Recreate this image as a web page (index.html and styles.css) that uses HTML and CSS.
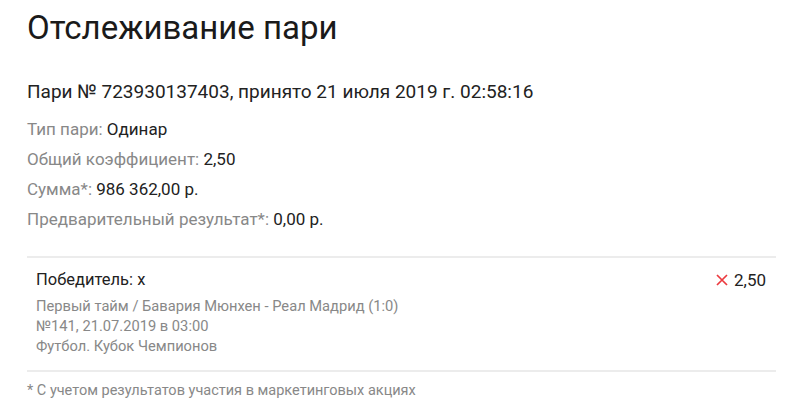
FILE: index.html
```html
<!DOCTYPE html>
<html lang="ru">
<head>
<meta charset="utf-8">
<title>Отслеживание пари</title>
<link rel="stylesheet" href="styles.css">
</head>
<body>
<main class="page">
  <h1 class="title">Отслеживание пари</h1>
  <p class="bet-head">Пари № 723930137403, принято 21 июля 2019 г. 02:58:16</p>
  <ul class="props">
    <li><span class="label">Тип пари:</span> <span class="value">Одинар</span></li>
    <li><span class="label">Общий коэффициент:</span> <span class="value">2,50</span></li>
    <li><span class="label">Сумма*:</span> <span class="value">986 362,00 р.</span></li>
    <li><span class="label">Предварительный результат*:</span> <span class="value">0,00 р.</span></li>
  </ul>
  <section class="event">
    <div class="event-top">
      <span class="outcome">Победитель: x</span>
      <span class="odds"><svg class="lost" width="12" height="12" viewBox="0 0 12 12" aria-hidden="true"><path d="M1 1L11 11M11 1L1 11" stroke="#ec3a3f" stroke-width="1.7" fill="none"/></svg>2,50</span>
    </div>
    <div class="event-info">
      <div>Первый тайм / Бавария Мюнхен - Реал Мадрид (1:0)</div>
      <div>№141, 21.07.2019 в 03:00</div>
      <div>Футбол. Кубок Чемпионов</div>
    </div>
  </section>
  <p class="note">* С учетом результатов участия в маркетинговых акциях</p>
</main>
</body>
</html>
```
FILE: styles.css
```css
* { box-sizing: border-box; }
html, body { margin: 0; padding: 0; background: #fff; }
body {
  font-family: Roboto, "Noto Sans", sans-serif;
  color: #222;
}
.page {
  width: 776px;
  padding: 8px 0 0 27px;
}
.title {
  margin: 0;
  font-size: 33px;
  line-height: 40px;
  font-weight: 400;
  color: #1a1a1a;
}
.bet-head {
  margin: 32px 0 0;
  font-size: 19px;
  line-height: 24px;
  color: #222;
}
.props {
  list-style: none;
  margin: 10px 0 0;
  padding: 0;
}
.props li {
  font-size: 17px;
  line-height: 30px;
}
.label { color: #888; }
.value { color: #222; }
.event {
  margin-top: 22px;
  border-top: 2px solid #ececec;
  border-bottom: 2px solid #ececec;
  padding: 10px 10px 14px 9px;
}
.event-top {
  display: flex;
  justify-content: space-between;
  font-size: 16.5px;
  line-height: 24px;
  color: #222;
}
.odds {
  display: flex;
  align-items: center;
  gap: 6px;
  font-size: 17px;
}
.lost { display: block; }
.event-info {
  margin-top: 4px;
  font-size: 14.7px;
  line-height: 20px;
  color: #888;
}
.note {
  margin: 10px 0 0;
  font-size: 14.5px;
  line-height: 18px;
  color: #888;
}
```
